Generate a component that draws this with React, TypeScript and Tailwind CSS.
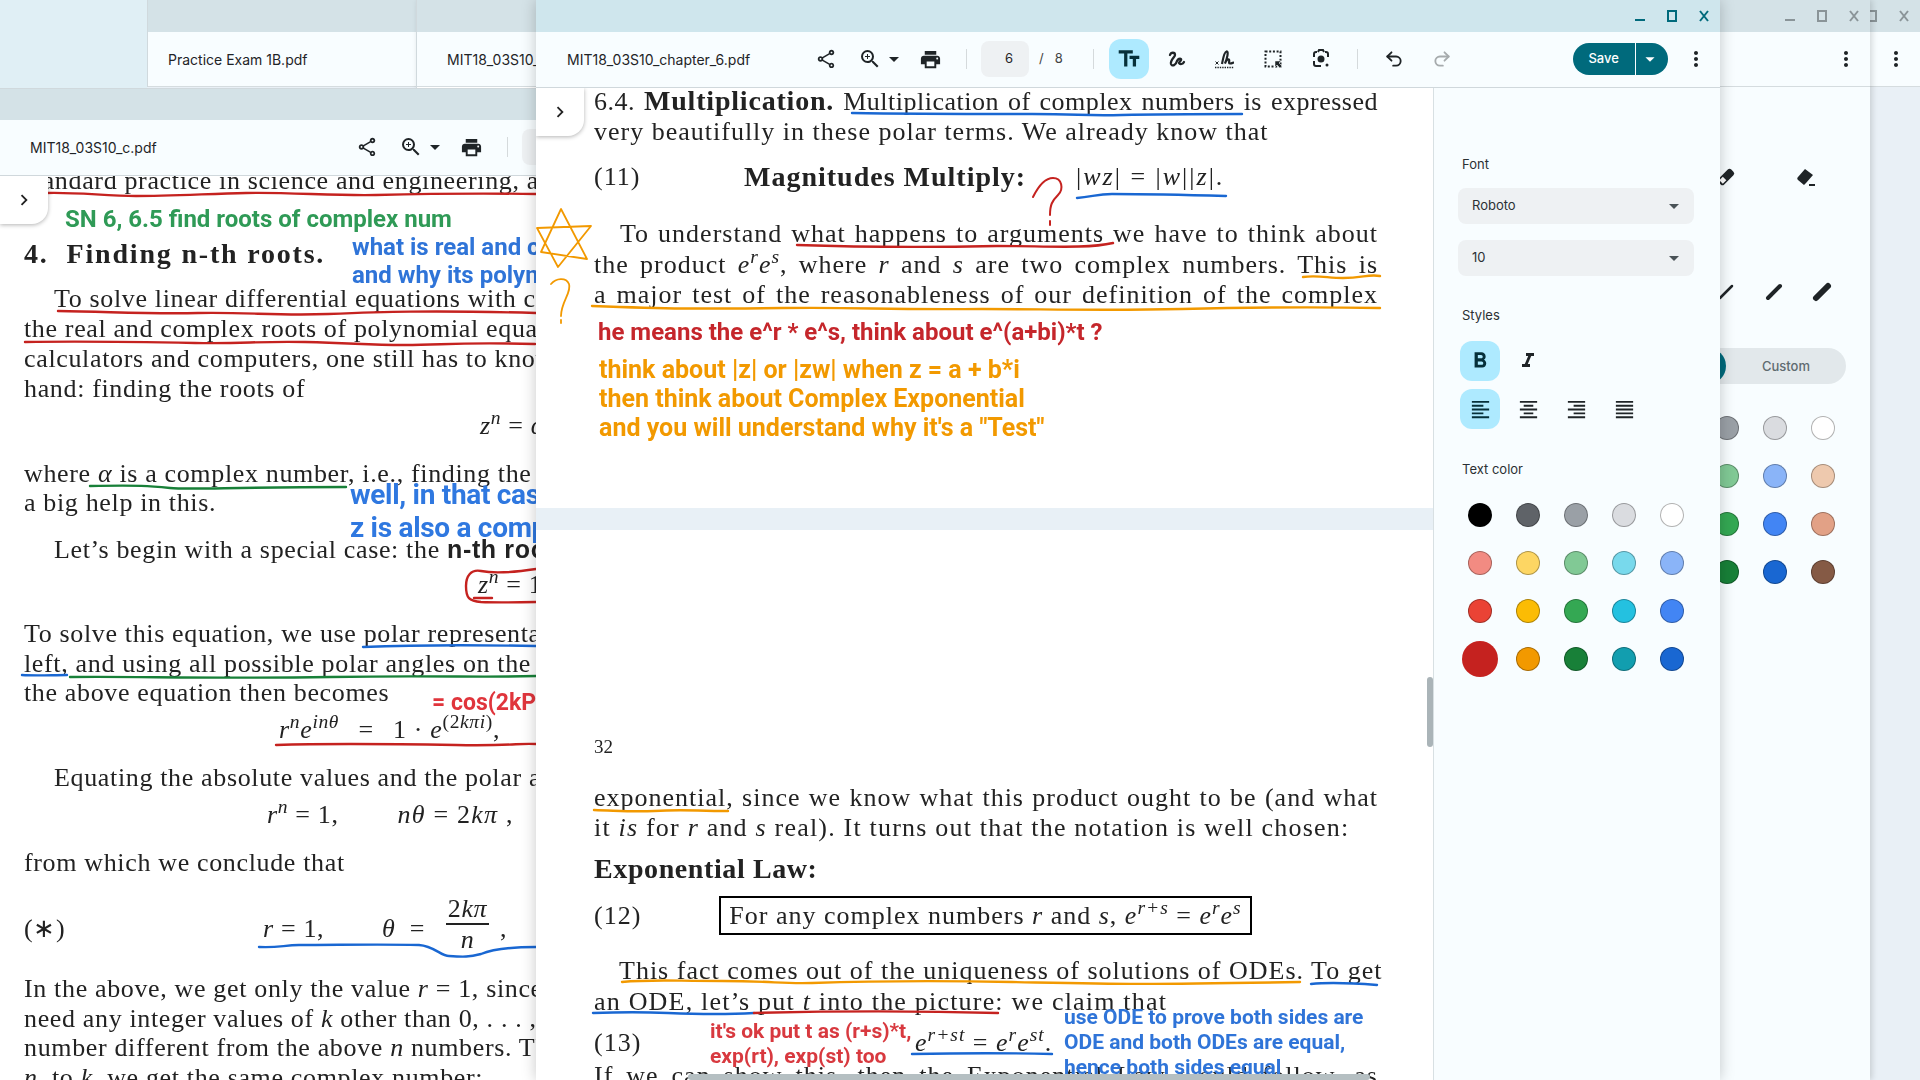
import React from "react";
import {
  MdArrowDropDown,
  MdChevronRight,
  MdFormatAlignCenter,
  MdFormatAlignJustify,
  MdFormatAlignLeft,
  MdFormatAlignRight,
  MdFormatBold,
  MdFormatItalic,
  MdMoreVert,
  MdOutlineShare,
  MdOutlineZoomIn,
  MdPrint,
  MdTextFields,
} from "react-icons/md";
import { Redo2, Undo2 } from "lucide-react";

const palette = [
  ["#000000", "#5f6368", "#9aa0a6", "#dadce0", "#ffffff"],
  ["#f28b82", "#fdd663", "#81c995", "#78d9ec", "#8ab4f8"],
  ["#ea4335", "#fbbc04", "#34a853", "#24c1e0", "#4285f4"],
  ["#c5221f", "#f29900", "#188038", "#129eaf", "#1967d2"],
];

const palette2 = [
  ["#000000", "#5f6368", "#9aa0a6", "#dadce0", "#ffffff"],
  ["#f28b82", "#fdd663", "#81c995", "#8ab4f8", "#eec9ae"],
  ["#ea4335", "#fbbc04", "#34a853", "#4285f4", "#e2a186"],
  ["#c5221f", "#f29900", "#188038", "#1967d2", "#855a45"],
];

const IconBtn = ({ children, className = "" }: { children: React.ReactNode; className?: string }) => (
  <div className={`flex h-10 w-10 shrink-0 items-center justify-center rounded-xl text-[#1f2427] ${className}`}>
    {children}
  </div>
);

const Divider = ({ className = "" }: { className?: string }) => <div className={`h-5 w-px shrink-0 bg-[#d5dadc] ${className}`} />;

const DrawIcon = () => (
  <svg width="24" height="24" viewBox="0 0 24 24" fill="none" stroke="currentColor" strokeWidth="2.300" strokeLinecap="round">
    <path d="M5 8c1-3 5-3 5 0 0 2-5 5-4 9 1 3 5 1 6-3 1-2 3-3 4-2 1 1-2 3-2 4 1 2 4 1 5-1" />
  </svg>
);

const SignIcon = () => (
  <svg width="24" height="24" viewBox="0 0 24 24" fill="none" stroke="currentColor">
    <path d="M2.500 14.500l3 3M5.500 14.500l-3 3" strokeWidth="1" />
    <path d="M9 17c1-5 2-12 4.500-12.500 2.500-.5.500 7.500-1.500 12 1-3 3-5 4-4s-1 4 1 4 3-1 4-1" strokeWidth="2.200" />
    <path d="M2 20.500h19" strokeWidth="1.400" strokeDasharray="1.400 1" />
  </svg>
);

const SelectIcon = () => (
  <svg width="24" height="24" viewBox="0 0 24 24" fill="none">
    <rect x="4.500" y="4.500" width="15" height="15" stroke="currentColor" strokeWidth="2" strokeDasharray="2 1.700" />
    <path d="M14 14h6l-2 2 3 3-2 2-3-3-2 2z" fill="currentColor" stroke="#f8fdff" strokeWidth="0.500" />
  </svg>
);

const LensIcon = () => (
  <svg width="24" height="24" viewBox="0 0 24 24" fill="none" stroke="currentColor" strokeWidth="2">
    <path d="M9 5l1-2h4l1 2" />
    <path d="M8 5H7a2 2 0 0 0-2 2v3M16 5h1a2 2 0 0 1 2 2v3M5 14v3a2 2 0 0 0 2 2h5" />
    <circle cx="12" cy="12" r="2.500" fill="currentColor" />
    <circle cx="18" cy="18" r="1.500" fill="currentColor" stroke="none" />
  </svg>
);

const WinControls = ({ color = "text-[#006a7c]" }: { color?: string }) => (
  <div className={`flex h-8 items-center gap-[16px] ${color}`}>
    <svg width="16" height="16" viewBox="0 0 16 16"><path d="M3 12h10" stroke="currentColor" strokeWidth="2" /></svg>
    <svg width="16" height="16" viewBox="0 0 16 16" fill="none"><rect x="4" y="3" width="8" height="10" stroke="currentColor" strokeWidth="2" /></svg>
    <svg width="16" height="16" viewBox="0 0 16 16"><path d="M4 3l8 10M12 3L4 13" stroke="currentColor" strokeWidth="2" /></svg>
  </div>
);

const Swatches = ({ rows, big }: { rows: string[][]; big?: boolean }) => (
  <div className="grid w-[240px] grid-cols-5 justify-items-center gap-y-6">
    {rows.flat().map((c, i) => (
      <div
        key={i}
        className={`flex rounded-full border border-black/30 ${big && i === 15 ? "-my-1.5 h-9 w-9 border-0" : "h-6 w-6"}`}
        style={{ backgroundColor: c }}
      />
    ))}
  </div>
);

const Select = ({ label }: { label: string }) => (
  <div className="flex h-9 w-[236px] items-center justify-between rounded-lg bg-[#eef1f3] pl-3.5 pr-2 text-[13px] text-[#2b3033]">
    <span>{label}</span>
    <MdArrowDropDown size={24} className="text-[#4a5357]" />
  </div>
);

const PanelLabel = ({ children, className = "" }: { children: React.ReactNode; className?: string }) => (
  <div className={`text-[13px] leading-5 text-[#2b3033] ${className}`}>{children}</div>
);

// one text line of a pdf page, 30px high
const L = ({ children, className = "" }: { children?: React.ReactNode; className?: string }) => (
  <div className={`h-[30px] shrink-0 overflow-visible whitespace-nowrap leading-[30px] ${className}`}>{children}</div>
);

const I = ({ children }: { children: React.ReactNode }) => <span className="italic">{children}</span>;

const J = "w-[784px] ml-[58px] [text-align-last:justify]";

const Note = ({ children, className }: { children: React.ReactNode; className: string }) => (
  <div className={`absolute whitespace-nowrap font-['Roboto'] font-bold blur-[0.4px] ${className}`}>{children}</div>
);

const SideToggle = () => (
  <div className="absolute left-0 top-0 z-10 flex h-12 w-12 items-center justify-center rounded-br-2xl bg-white text-[#222] shadow-[0_1px_4px_rgba(0,0,0,0.3)]">
    <MdChevronRight size={22} />
  </div>
);

const Stroke = ({ d, c, w = 2.4 }: { d: string; c: string; w?: number }) => (
  <path d={d} stroke={c} strokeWidth={w} fill="none" strokeLinecap="round" strokeLinejoin="round" />
);

const RED = "#c5221f";
const BLUE = "#1967d2";
const GREEN = "#188038";
const ORANGE = "#f29900";

export default function App() {
  return (
    <div className="relative h-[1080px] w-[1920px] overflow-hidden bg-[#e9f0f6] font-['Inter'] text-[#1f2427]">
      {/* top strip of the desktop */}
      <div className="absolute left-0 top-0 h-[88px] w-[147px] bg-[#e0eff5]" />

      {/* window furthest back */}
      <div className="absolute left-[147px] top-0 w-[1773px] border-l border-[#d0d9dd]">
        <div className="flex h-8 justify-end bg-[#d4e2e7] pr-2">
          <WinControls color="text-[#8a9498]" />
        </div>
        <div className="flex h-[55px] items-center justify-between border-b border-[#d5dcdf] bg-[#f8fdff] pl-[20px] pr-1">
          <span className="text-[14px]">Practice Exam 1B.pdf</span>
          <IconBtn><MdMoreVert size={24} /></IconBtn>
        </div>
      </div>

      {/* second window with its side panel */}
      <div className="absolute left-[416px] top-0 flex h-[1080px] w-[1454px] flex-col border-l border-[#d0d9dd] shadow-[2px_0_6px_rgba(0,0,0,0.15)]">
        <div className="flex h-8 shrink-0 justify-end bg-[#d4e2e7] pr-2">
          <WinControls color="text-[#8a9498]" />
        </div>
        <div className="flex h-[55px] shrink-0 items-center justify-between border-b border-[#d5dcdf] bg-[#f8fdff] pl-[30px] pr-1">
          <span className="text-[14px]">MIT18_03S10_chapter_3.pdf</span>
          <IconBtn><MdMoreVert size={24} /></IconBtn>
        </div>
        <div className="flex flex-1 justify-end bg-white">
          <div className="flex w-[287px] flex-col bg-[#f8fdff] pl-[25px]">
            <div className="mt-[78px] flex h-6 items-center text-[#1f2427]">
              <div className="w-[108px]" />
              <svg width="24" height="24" viewBox="0 0 24 24" className="ml-[-2px]">
                <rect x="8" y="3" width="8" height="18" rx="2.500" fill="currentColor" transform="rotate(45 12 12)" />
                <rect x="9.500" y="14" width="5" height="5" fill="#fff" transform="rotate(45 12 12)" />
              </svg>
              <svg width="24" height="24" viewBox="0 0 24 24" className="ml-[55px]">
                <path d="M12 4l8 6-7 8-2 2-6-5c-1-1-1-2 0-3z" fill="currentColor" />
                <path d="M16 20h6" stroke="currentColor" strokeWidth="2" />
              </svg>
            </div>
            <div className="mt-[91px] flex h-6 items-center gap-6 pl-[10px] text-[#1f2427]">
              {[1, 1.5, 2.5, 4, 6].map((w) => (
                <svg key={w} width="24" height="24" viewBox="0 0 24 24"><path d="M6 18L18 6" stroke="currentColor" strokeWidth={w} strokeLinecap="round" /></svg>
              ))}
            </div>
            <div className="ml-[22px] mt-[44px] flex h-9 w-[216px] rounded-full bg-[#e2e8eb]">
              <div className="h-9 w-[96px] rounded-full bg-[#006a7c]" />
              <div className="flex-1 text-center text-[13px] font-medium leading-9 text-[#5f6b70]">Custom</div>
            </div>
            <div className="-ml-[1px] mt-[32px]">
              <Swatches rows={palette2} />
            </div>
          </div>
        </div>
      </div>

      {/* left window */}
      <div className="absolute left-0 top-[88px] flex h-[992px] w-[1000px] flex-col bg-white">
        <div className="h-8 shrink-0 border-t border-[#d0d9dd] bg-[#d4e2e7]" />
        <div className="flex h-[56px] shrink-0 items-center border-b border-[#d0d8dc] bg-[#f8fdff] pb-px">
          <span className="w-[347px] pl-[30px] text-[14px]">MIT18_03S10_c.pdf</span>
          <IconBtn><MdOutlineShare size={22} /></IconBtn>
          <div className="ml-[9px] flex h-10 items-center pl-[1px]">
            <MdOutlineZoomIn size={24} className="ml-[2px]" />
            <MdArrowDropDown size={24} />
          </div>
          <IconBtn className="ml-[4px]"><MdPrint size={23} /></IconBtn>
          <Divider className="ml-4" />
          <div className="ml-[14px] h-9 w-12 rounded-lg bg-[#eef1f3]" />
        </div>
        <div className="relative flex-1 overflow-hidden bg-white font-['Liberation_Serif'] text-[26px] tracking-[0.65px] text-[#222]">
          <SideToggle />
          <div className="flex flex-col pl-6 blur-[0.4px]">
            <L className="-mt-[10px]">standard practice in science and engineering, and</L>
            <L className="mt-[43px] text-[28px] font-bold tracking-[1.8px]">4.<span className="ml-[18px]">Finding n-th roots.</span></L>
            <L className="mt-[15px] pl-[30px]">To solve linear differential equations with constant</L>
            <L>the real and complex roots of polynomial equations</L>
            <L>calculators and computers, one still has to know how</L>
            <L>hand: finding the roots of</L>
            <L className="mt-[7px] pl-[456px]"><I>z<sup>n</sup></I> = <I>α</I></L>
            <L className="mt-[18px]">where <I>α</I> is a complex number, i.e., finding the <I>n</I>-th</L>
            <L className="-mt-[1px]">a big help in this.</L>
            <L className="mt-[16px] pl-[30px]">Let’s begin with a special case: the <span className="font-['Liberation_Sans'] text-[25px] font-bold">n-th roots</span></L>
            <L className="mt-[6px] pl-[454px]"><I>z<sup>n</sup></I> = 1</L>
            <L className="mt-[19px]">To solve this equation, we use polar representations</L>
            <L>left, and using all possible polar angles on the right</L>
            <L className="-mt-[1px]">the above equation then becomes</L>
            <L className="mt-[7px] pl-[255px]"><I>r<sup>n</sup>e<sup>inθ</sup></I> &nbsp;<span className="mx-[5px]">=</span> &nbsp;1 · <I>e</I><sup>(2<I>kπi</I>)</sup>,</L>
            <L className="mt-[18px] pl-[30px]">Equating the absolute values and the polar angles</L>
            <L className="mt-[7px] pl-[243px]"><I>r<sup>n</sup></I> = 1,<span className="ml-[59px] tracking-[1.2px]"><I>nθ</I> = 2<I>kπ</I> ,</span></L>
            <L className="mt-[18px]">from which we conclude that</L>
            <L className="relative mt-[36px]">
              (∗)
              <span className="absolute left-[239px]"><I>r</I> = 1,</span>
              <span className="absolute left-[358px]"><I>θ</I> &nbsp;=</span>
              <span className="absolute left-[422px] top-[-19px] w-[43px] border-b-2 border-[#222] text-center leading-[28px]">2<I>kπ</I></span>
              <span className="absolute left-[422px] top-[11px] w-[43px] text-center leading-[30px]"><I>n</I></span>
              <span className="absolute left-[476px]">,</span>
            </L>
            <L className="mt-[30px]">In the above, we get only the value <I>r</I> = 1, since</L>
            <L>need any integer values of <I>k</I> other than 0, . . . , <I>n</I></L>
            <L className="-mt-[1px]">number different from the above <I>n</I> numbers. The</L>
            <L><I>n</I>, to <I>k</I>, we get the same complex number:</L>
          </div>

          <Note className="left-[65px] top-[29px] text-[24px] leading-7 tracking-normal text-[#2f9a56]">SN 6, 6.5 find roots of complex num</Note>
          <Note className="left-[352px] top-[57px] text-[24px] leading-[28px] tracking-normal text-[#2f74d8]">what is real and complex<br />and why its polynomial</Note>
          <Note className="left-[350px] top-[302px] text-[28px] leading-[33px] tracking-[-0.3px] text-[#2f78e0]">well, in that case<br />z is also a complex</Note>
          <Note className="left-[432px] top-[513px] text-[23px] leading-7 tracking-normal text-[#e0353c]">= cos(2kPi)</Note>

          <svg className="absolute left-0 top-0" width="1000" height="816" viewBox="0 176 1000 816" fill="none">
            <Stroke c={RED} d="M46 193c30-1 60 3 90 3s70-2 110-3 90 3 130 2 100-2 160-1" />
            <Stroke c={RED} d="M58 311c60 1 90 3 140 2s80 3 130 1 100-4 208-1" />
            <Stroke c={RED} d="M25 342c60-1 120 0 170 1s60-2 110-1 60 3 100 3 50-3 130-1" />
            <Stroke c={GREEN} d="M90 486c50-1 60 0 80 2s60-1 176-1" />
            <Stroke c={BLUE} d="M363 647c50-2 120-2 173-1" />
            <Stroke c={BLUE} d="M22 675c15 1 30 0 45 0" />
            <Stroke c={GREEN} d="M70 677c60-1 140 2 260 0s140 1 206-1" />
            <Stroke c={RED} d="M536 569c-20 3-40 5-55 2-10-2-15 5-15 15 0 12 3 15 15 16 20 1 40 0 55 0" />
            <Stroke c={RED} d="M474 598h18" />
            <Stroke c={RED} d="M276 745c60-2 120-1 180 0s60-2 80-1" />
            <Stroke c={BLUE} d="M259 947c20 1 25-2 40-2 40 0 80-1 120 0 15 1 22 11 30 11 15 1 20 1 32-2 12-5 30-7 55-7" />
          </svg>
        </div>
      </div>

      {/* front window */}
      <div className="absolute left-[536px] top-0 flex h-[1080px] w-[1184px] flex-col bg-white shadow-[0_0_14px_rgba(0,0,0,0.22)]">
        <div className="flex h-8 shrink-0 justify-end bg-[#cfe6ed] pr-2">
          <WinControls />
        </div>
        <div className="flex h-[56px] shrink-0 items-center border-b border-[#d0d8dc] bg-[#f8fdff] pb-px">
          <span className="w-[270px] pl-[31px] text-[14px]">MIT18_03S10_chapter_6.pdf</span>
          <IconBtn><MdOutlineShare size={22} /></IconBtn>
          <div className="ml-[3px] flex h-10 items-center pl-[9px]">
            <MdOutlineZoomIn size={24} />
            <MdArrowDropDown size={24} />
          </div>
          <IconBtn className="ml-[4px]"><MdPrint size={23} /></IconBtn>
          <Divider className="ml-4" />
          <div className="ml-[14px] flex h-9 w-12 items-center justify-center rounded-lg bg-[#eef1f3] pl-2 text-[13px]">6</div>
          <span className="ml-[10px] text-[13px] text-[#444]">/</span>
          <span className="ml-[11px] w-[8px] text-[13px] text-[#444]">8</span>
          <Divider className="ml-[30px]" />
          <IconBtn className="ml-[15px] bg-[#aeeaff]"><MdTextFields size={26} className="text-[#06303a]" /></IconBtn>
          <IconBtn className="ml-2"><DrawIcon /></IconBtn>
          <IconBtn className="ml-2"><SignIcon /></IconBtn>
          <IconBtn className="ml-2"><SelectIcon /></IconBtn>
          <IconBtn className="ml-2"><LensIcon /></IconBtn>
          <Divider className="ml-4" />
          <IconBtn className="ml-4"><Undo2 size={20} strokeWidth={2.2} /></IconBtn>
          <IconBtn className="ml-2 text-[#a6abad]"><Redo2 size={20} strokeWidth={2.2} /></IconBtn>
          <div className="ml-[111px] flex h-8 overflow-hidden rounded-full">
            <div className="flex w-[62px] items-center justify-center bg-[#006a7c] text-[13px] font-medium text-white">Save</div>
            <div className="ml-[1px] flex w-[32px] items-center justify-center bg-[#006a7c] pr-1 text-white"><MdArrowDropDown size={22} /></div>
          </div>
          <IconBtn className="ml-2"><MdMoreVert size={24} /></IconBtn>
        </div>

        <div className="flex min-h-0 flex-1">
          <div className="relative w-[897px] shrink-0 overflow-hidden bg-[#e8f0f6] font-['Liberation_Serif'] text-[26px] tracking-[1px] text-[#222]">
            <SideToggle />
            <div className="flex h-[420px] flex-col bg-white">
              <div className="flex flex-col blur-[0.4px]">
                <L className={`-mt-[2px] tracking-[0.5px] ${J}`}>6.4. <b className="text-[28px] tracking-[0.8px]">Multiplication.</b> Multiplication of complex numbers is expressed</L>
                <L className="ml-[58px] mt-[1px]">very beautifully in these polar terms. We already know that</L>
                <L className="relative ml-[58px] mt-[15px]">
                  (11)
                  <b className="absolute left-[150px] text-[28px] tracking-[1px]">Magnitudes Multiply:</b>
                  <span className="absolute left-[482px] tracking-[2px]">|<I>wz</I>| = |<I>w</I>||<I>z</I>|.</span>
                </L>
                <L className={`mt-[27px] pl-[26px] ${J}`}>To understand what happens to arguments we have to think about</L>
                <L className={`mt-[1px] ${J}`}>the product <I>e<sup>r</sup>e<sup>s</sup></I>, where <I>r</I> and <I>s</I> are two complex numbers. This is</L>
                <L className={J}>a major test of the reasonableness of our definition of the complex</L>
              </div>
            </div>
            <div className="mt-[22px] flex h-[600px] flex-col bg-white">
              <div className="flex flex-col blur-[0.4px]">
                <L className="ml-[58px] mt-[202px] text-[19px] tracking-normal">32</L>
                <L className={`mt-[21px] ${J}`}>exponential, since we know what this product ought to be (and what</L>
                <L className="ml-[58px] tracking-[1.2px]">it <I>is</I> for <I>r</I> and <I>s</I> real). It turns out that the notation is well chosen:</L>
                <L className="ml-[58px] mt-[11px] text-[28px] font-bold tracking-[0.6px]">Exponential Law:</L>
                <div className="ml-[58px] mt-[12px] flex h-[39px] items-center">
                  <span className="w-[125px]">(12)</span>
                  <div className="flex h-[39px] w-[533px] items-center justify-center border-2 border-black leading-none">
                    For any complex numbers&nbsp;<I>r</I>&nbsp;and&nbsp;<I>s</I>,&nbsp;<I>e<sup>r+s</sup></I>&nbsp;=&nbsp;<I>e<sup>r</sup>e<sup>s</sup></I>
                  </div>
                </div>
                <L className={`mt-[21px] pl-[25px] ${J}`}>This fact comes out of the uniqueness of solutions of ODEs. To get</L>
                <L className="ml-[58px] mt-[1px] tracking-[1.2px]">an ODE, let’s put <I>t</I> into the picture: we claim that</L>
                <L className="relative ml-[58px] mt-[11px]">
                  (13)
                  <span className="absolute left-[321px]"><I>e<sup>r+st</sup></I> = <I>e<sup>r</sup>e<sup>st</sup></I>.</span>
                </L>
                <L className={`mt-[3px] ${J}`}>If we can show this, then the Exponential Law would follow, as</L>
              </div>
            </div>

            <Note className="left-[62px] top-[230px] text-[24px] leading-7 tracking-normal text-[#c5262b]">he means the e^r * e^s, think about e^(a+bi)*t ?</Note>
            <Note className="left-[63px] top-[267px] text-[25px] leading-[29px] tracking-normal text-[#f29900]">think about |z| or |zw| when z = a + b*i<br />then think about Complex Exponential<br />and you will understand why it's a "Test"</Note>
            <Note className="left-[174px] top-[931px] text-[21px] leading-[25px] tracking-normal text-[#d8393f]">it's ok put t as (r+s)*t,<br />exp(rt), exp(st) too</Note>
            <Note className="left-[528px] top-[917px] text-[21px] leading-[25px] tracking-normal text-[#2f74d8]">use ODE to prove both sides are<br />ODE and both ODEs are equal,<br />hence both sides equal</Note>

            <svg className="absolute left-0 top-0" width="897" height="992" viewBox="536 88 897 992" fill="none">
              <Stroke c={BLUE} d="M852 113c60 1 100 1 180 1 50 0 50 2 90 1s80-1 120-1" />
              <Stroke c={BLUE} d="M1077 198c15-1 20-4 35-4 30 0 80 1 114 2" />
              <Stroke c={RED} d="M1033 197c6-12 12-19 20-19 9 0 11 11 5 17-6 6-8 10-8 20" w={2} />
              <Stroke c={RED} d="M1050 221v4" w={2} />
              <Stroke c={RED} d="M797 245c60 2 150 2 200 1 50 0 90 3 116-3" />
              <Stroke c={ORANGE} d="M561 209l-20 43 46 7zM537 228l54-2-33 41z" w={1.800} />
              <Stroke c={ORANGE} d="M551 284c5-6 15-7 18 0 3 8-8 18-8 32" w={1.800} />
              <Stroke c={ORANGE} d="M561 320v3" w={1.800} />
              <Stroke c={ORANGE} d="M1303 277c15-2 25 1 40 1 20 0 25-4 37-2" />
              <Stroke c={ORANGE} d="M592 306c80 3 100 3 190 2s90 2 200 1c60 0 120 2 200 0s140-2 198-1" />
              <Stroke c={ORANGE} d="M594 810c30 1 40 2 60 1 30-2 40 0 74 0" />
              <Stroke c={ORANGE} d="M622 982c30-3 50-1 100-1s60 3 90 2 100-3 200-1 120 3 288 0" />
              <Stroke c={BLUE} d="M1311 984c20-2 40-1 66 1" />
              <Stroke c={BLUE} d="M593 1013c30-1 50-1 75 0s50 2 86 0" />
              <Stroke c={RED} d="M754 1013c80-2 170-2 244 0" />
              <Stroke c={BLUE} d="M912 1054c50-1 100-1 140 0" />
            </svg>

            <div className="absolute bottom-0 left-[152px] h-1.5 w-[682px] rounded-full bg-[#b5bfc2]" />
            <div className="absolute right-0 top-[589px] h-[70px] w-[6px] rounded-full bg-[#aab4b8]" />
          </div>

          {/* side panel */}
          <div className="flex w-[287px] shrink-0 flex-col border-l border-[#d8e0e3] bg-[#f8fdff] pl-[24px]">
            <PanelLabel className="ml-[4px] mt-[66px]">Font</PanelLabel>
            <div className="mt-[14px] flex flex-col gap-4">
              <Select label="Roboto" />
              <Select label="10" />
            </div>
            <PanelLabel className="ml-[4px] mt-[29px]">Styles</PanelLabel>
            <div className="ml-[2px] mt-[16px] flex gap-2">
              <IconBtn className="bg-[#aeeaff]"><MdFormatBold size={26} className="text-[#06303a]" /></IconBtn>
              <IconBtn><MdFormatItalic size={24} /></IconBtn>
            </div>
            <div className="ml-[2px] mt-2 flex gap-2">
              <IconBtn className="bg-[#aeeaff]"><MdFormatAlignLeft size={23} className="text-[#06303a]" /></IconBtn>
              <IconBtn><MdFormatAlignCenter size={23} /></IconBtn>
              <IconBtn><MdFormatAlignRight size={23} /></IconBtn>
              <IconBtn><MdFormatAlignJustify size={23} /></IconBtn>
            </div>
            <PanelLabel className="ml-[4px] mt-[30px]">Text color</PanelLabel>
            <div className="-ml-[2px] mt-[24px]">
              <Swatches rows={palette} big />
            </div>
          </div>
        </div>
      </div>
    </div>
  );
}
